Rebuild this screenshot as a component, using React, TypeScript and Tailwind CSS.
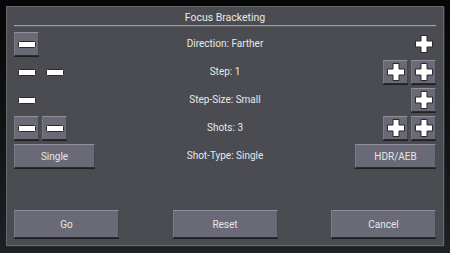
import React from "react";

const Minus = () => (
  <svg width="18" height="7" viewBox="0 0 18 7" className="block">
    <rect x="0.5" y="0.5" width="17" height="6" rx="1" fill="#ffffff" stroke="#2a2a2e" strokeWidth="1" />
  </svg>
);

const Plus = () => (
  <svg width="18" height="18" viewBox="0 0 18 18" className="block">
    <path
      d="M6 0.5 H12 V6 H17.5 V12 H12 V17.5 H6 V12 H0.5 V6 H6 Z"
      fill="#ffffff"
      stroke="#2a2a2e"
      strokeWidth="1"
      strokeLinejoin="round"
    />
  </svg>
);

const Btn = ({ className = "", children }: { className?: string; children?: React.ReactNode }) => (
  <div
    className={
      "flex items-center justify-center bg-[#696a76] border-t border-t-[#8f909b] border-l border-l-[#7a7b86] border-r border-r-[#45464e] border-b border-b-[#2a2b30] shadow-[0_1px_0_#1e1f23] text-[#e6e6e6] text-[10px] " +
      className
    }
  >
    {children}
  </div>
);

const Bare = ({ children }: { children: React.ReactNode }) => (
  <div className="flex h-[24px] w-[25px] items-center justify-center">{children}</div>
);

const Row = ({ left, text, right }: { left: React.ReactNode; text: string; right: React.ReactNode }) => (
  <div className="grid h-[24px] grid-cols-[1fr_auto_1fr] items-center">
    <div className="flex gap-[3px] justify-start">{left}</div>
    <div className="text-[10px] text-[#e8e8e8] leading-none">{text}</div>
    <div className="flex gap-[3px] justify-end">{right}</div>
  </div>
);

export default function App() {
  return (
    <div
      className="w-[450px] h-[253px] bg-gradient-to-b from-[#060606] to-[#1d2025] pt-[6px] pl-[6px]"
      style={{ fontFamily: "Roboto, 'Liberation Sans', sans-serif" }}
    >
      <div className="w-[438px] h-[240px] bg-[#4a4c52] border border-[#66686d] shadow-[1px_1px_0_#2a2c30] px-[7px] flex flex-col">
        <div className="h-[17px] flex items-end justify-center text-[10.5px] text-[#e8e8e8] leading-none pb-[1px]">
          Focus Bracketing
        </div>
        <div className="h-[2px] bg-[#a0a1a5] mt-[1px] border-b border-b-[#5a5c60]" />
        <div className="mt-[5px] flex flex-col gap-[4px]">
          <Row
            left={<Btn className="w-[25px] h-[24px]"><Minus /></Btn>}
            text="Direction: Farther"
            right={<Bare><Plus /></Bare>}
          />
          <Row
            left={
              <>
                <Bare><Minus /></Bare>
                <Bare><Minus /></Bare>
              </>
            }
            text="Step: 1"
            right={
              <>
                <Btn className="w-[25px] h-[24px]"><Plus /></Btn>
                <Btn className="w-[25px] h-[24px]"><Plus /></Btn>
              </>
            }
          />
          <Row
            left={<Bare><Minus /></Bare>}
            text="Step-Size: Small"
            right={<Btn className="w-[25px] h-[24px]"><Plus /></Btn>}
          />
          <Row
            left={
              <>
                <Btn className="w-[25px] h-[24px]"><Minus /></Btn>
                <Btn className="w-[25px] h-[24px]"><Minus /></Btn>
              </>
            }
            text="Shots: 3"
            right={
              <>
                <Btn className="w-[25px] h-[24px]"><Plus /></Btn>
                <Btn className="w-[25px] h-[24px]"><Plus /></Btn>
              </>
            }
          />
          <Row
            left={<Btn className="w-[81px] h-[24px]">Single</Btn>}
            text="Shot-Type: Single"
            right={<Btn className="w-[81px] h-[24px]">HDR/AEB</Btn>}
          />
        </div>
        <div className="mt-auto mb-[7px] flex justify-between">
          <Btn className="w-[105px] h-[28px]">Go</Btn>
          <Btn className="w-[105px] h-[28px]">Reset</Btn>
          <Btn className="w-[105px] h-[28px]">Cancel</Btn>
        </div>
      </div>
    </div>
  );
}
